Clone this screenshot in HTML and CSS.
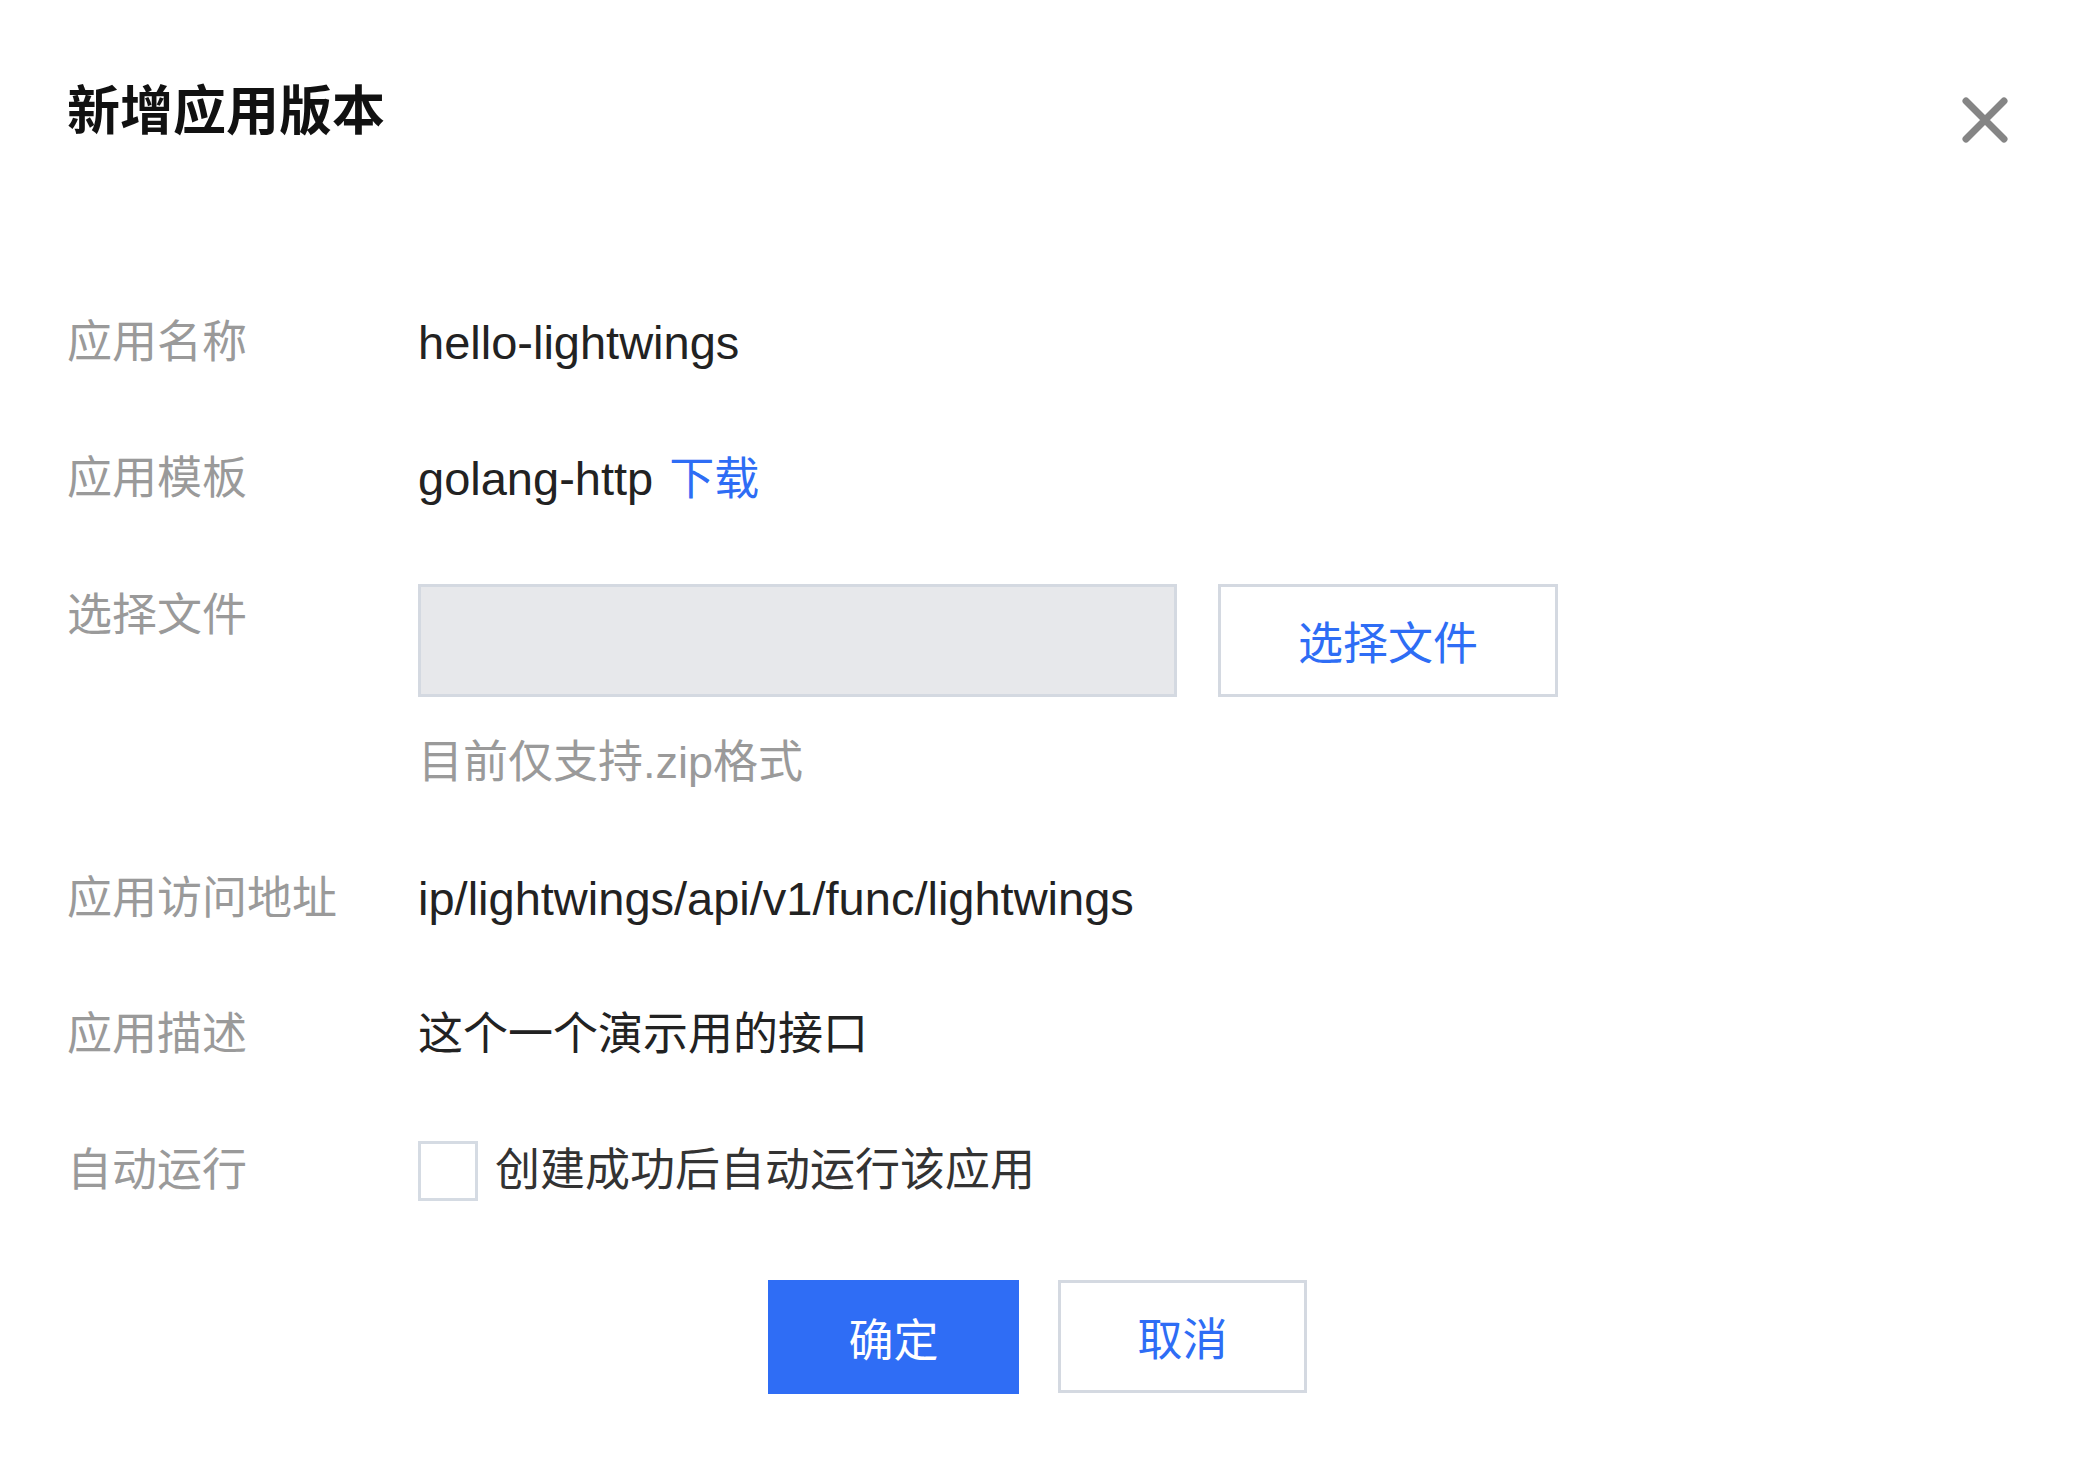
FILE: index.html
```html
<!DOCTYPE html>
<html lang="zh-CN">
<head>
    <meta charset="UTF-8">
    <meta name="viewport" content="width=device-width, initial-scale=1.0">
    <title>新增应用版本</title>
    <link rel="stylesheet" href="styles.css">
</head>
<body>

<div class="dialog">
    <div class="dialog-header">
        <h2 class="dialog-title">新增应用版本</h2>
        <button class="close-button" aria-label="关闭">
            <svg width="46" height="46" viewBox="0 0 46 46">
                <path d="M4 4 L42 42 M42 4 L4 42" stroke="#858585" stroke-width="7" stroke-linecap="round" fill="none"/>
            </svg>
        </button>
    </div>

    <div class="form">
        <div class="form-row">
            <div class="form-label">应用名称</div>
            <div class="form-value value-en">hello-lightwings</div>
        </div>
        <div class="form-row">
            <div class="form-label">应用模板</div>
            <div class="form-value"><span class="value-en">golang-http</span><a class="link" href="#">下载</a></div>
        </div>
        <div class="form-row">
            <div class="form-label">选择文件</div>
            <div class="form-value">
                <div class="upload">
                    <div class="upload-input"></div>
                    <button class="upload-button">选择文件</button>
                </div>
                <div class="hint">目前仅支持.zip格式</div>
            </div>
        </div>
        <div class="form-row">
            <div class="form-label">应用访问地址</div>
            <div class="form-value value-en">ip/lightwings/api/v1/func/lightwings</div>
        </div>
        <div class="form-row">
            <div class="form-label">应用描述</div>
            <div class="form-value">这个一个演示用的接口</div>
        </div>
        <div class="form-row">
            <div class="form-label">自动运行</div>
            <label class="form-value checkbox">
                <span class="checkbox-box"></span>
                <span class="checkbox-text">创建成功后自动运行该应用</span>
            </label>
        </div>
    </div>

    <div class="dialog-footer">
        <button class="btn btn-primary">确定</button>
        <button class="btn btn-default">取消</button>
    </div>
</div>

</body>
</html>
```

FILE: styles.css
```css
body {
    margin: 0;
    background-color: #fff;
    font-family: "Liberation Sans", "Noto Sans CJK SC", sans-serif;
    color: #222;
}
.dialog {
    padding: 76px 70px 0 67px;
}
.dialog-header {
    display: flex;
    justify-content: space-between;
    align-items: center;
    height: 72px;
}
.dialog-title {
    margin: 0;
    font-size: 53px;
    line-height: 72px;
    font-weight: bold;
    color: #111;
}
.close-button {
    margin-top: 16px;
    padding: 0;
    border: none;
    background: none;
    width: 46px;
    height: 46px;
    cursor: pointer;
}
.form {
    margin-top: 163px;
    display: flex;
    flex-direction: column;
    gap: 72px;
}
.form-row {
    display: flex;
    align-items: flex-start;
}
.form-label {
    width: 351px;
    flex-shrink: 0;
    font-size: 45px;
    line-height: 64px;
    color: #9a9a9a;
}
.form-value {
    font-size: 45px;
    line-height: 64px;
    color: #222;
}
.value-en {
    font-size: 47px;
}
.link {
    margin-left: 16px;
    color: #2e6df5;
    text-decoration: none;
}
.upload {
    display: flex;
}
.upload-input {
    width: 753px;
    height: 107px;
    background-color: #e7e8eb;
    border: 3px solid #d4d9e1;
}
.upload-button {
    margin-left: 41px;
    width: 340px;
    height: 113px;
    background: #fff;
    border: 3px solid #d4d9e1;
    font-family: inherit;
    font-size: 45px;
    color: #2e6df5;
    cursor: pointer;
}
.hint {
    margin-top: 34px;
    font-size: 45px;
    line-height: 64px;
    color: #9a9a9a;
}
.checkbox {
    display: flex;
    align-items: center;
    cursor: pointer;
}
.checkbox-box {
    width: 54px;
    height: 54px;
    border: 3px solid #d5dbe3;
    background: #fff;
    margin-right: 17px;
}
.checkbox-text {
    color: #333;
}
.dialog-footer {
    margin-top: 77px;
    display: flex;
    justify-content: center;
    gap: 39px;
}
.btn {
    width: 251px;
    height: 114px;
    font-family: inherit;
    font-size: 45px;
    cursor: pointer;
    border-radius: 0;
}
.btn-primary {
    background-color: #2f6df5;
    border: none;
    color: #fff;
}
.btn-default {
    width: 249px;
    height: 113px;
    background: #fff;
    border: 3px solid #d4d9e1;
    color: #2e6df5;
}
```
